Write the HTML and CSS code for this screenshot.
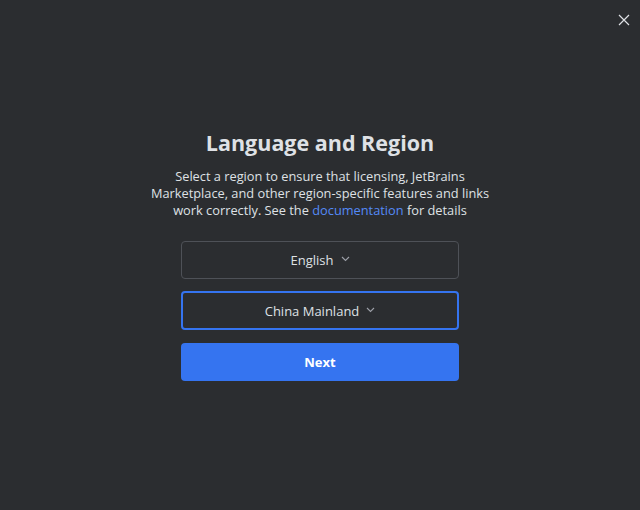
FILE: index.html
```html
<!DOCTYPE html>
<html>
<head>
<meta charset="utf-8">
<link rel="stylesheet" href="styles.css">
</head>
<body>
<div class="window">
  <button class="close" aria-label="Close">
    <svg width="12" height="12" viewBox="0 0 12 12"><path d="M1 1L11 11M11 1L1 11" stroke="#dfe1e5" stroke-width="1.2" fill="none"/></svg>
  </button>
  <main class="content">
    <h1 class="title">Language and Region</h1>
    <p class="desc">Select a region to ensure that licensing, JetBrains Marketplace, and other region-specific features and links work correctly. See the <a class="link">documentation</a> for details</p>
    <div class="controls">
      <div class="select">English <svg class="chev" width="9" height="6" viewBox="0 0 9 6"><path d="M1 1L4.5 4.5L8 1" stroke="#9da0a8" stroke-width="1.1" fill="none"/></svg></div>
      <div class="select focused">China Mainland <svg class="chev" width="9" height="6" viewBox="0 0 9 6"><path d="M1 1L4.5 4.5L8 1" stroke="#9da0a8" stroke-width="1.1" fill="none"/></svg></div>
      <button class="primary">Next</button>
    </div>
  </main>
</div>
</body>
</html>
```
FILE: styles.css
```css
html, body {
  margin: 0;
  padding: 0;
  background: #2b2d30;
}
.window {
  position: relative;
  width: 640px;
  height: 510px;
  background: #2b2d30;
  font-family: "Open Sans", "Noto Sans", sans-serif;
  color: #dfe1e5;
}
.close {
  position: absolute;
  top: 14px;
  right: 10px;
  width: 12px;
  height: 12px;
  padding: 0;
  border: 0;
  background: none;
  display: flex;
}
.content {
  display: flex;
  flex-direction: column;
  align-items: center;
  padding-top: 128px;
}
.title {
  margin: 0;
  font-size: 21.5px;
  line-height: 30px;
  font-weight: 700;
  color: #dfe1e5;
}
.desc {
  margin: 10px 0 0;
  width: 345px;
  text-align: center;
  font-size: 12.8px;
  line-height: 17px;
  color: #dfe1e5;
}
.link {
  color: #548af7;
}
.controls {
  margin-top: 22px;
  width: 278px;
  display: flex;
  flex-direction: column;
  gap: 12px;
}
.select {
  box-sizing: border-box;
  height: 38px;
  border: 1px solid #4e5157;
  border-radius: 4px;
  display: flex;
  align-items: center;
  justify-content: center;
  gap: 7px;
  font-size: 13px;
  color: #dfe1e5;
}
.select.focused {
  height: 39px;
  border: 2px solid #3574f0;
}
.chev {
  margin-top: -2px;
}
.primary {
  margin-top: 1px;
  height: 38px;
  border: 0;
  border-radius: 4px;
  background: #3574f0;
  color: #ffffff;
  font-family: inherit;
  font-size: 13px;
  font-weight: 700;
}
```
